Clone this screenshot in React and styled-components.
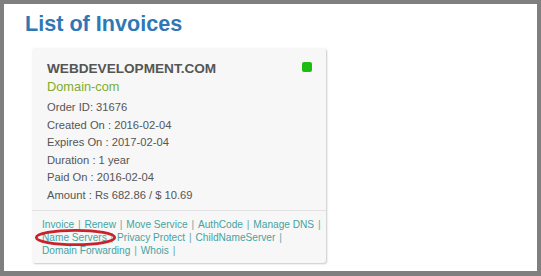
import React from 'react';
import styled, { createGlobalStyle } from 'styled-components';

const GlobalStyle = createGlobalStyle`
  html, body {
    margin: 0;
    padding: 0;
    background: #7f7f7f;
  }
  body {
    font-family: "Liberation Sans", Arial, sans-serif;
  }
`;

const Frame = styled.div`
  box-sizing: border-box;
  height: 276px;
  padding: 4px 4px 5px 4px;
`;

const Panel = styled.div`
  box-sizing: border-box;
  height: 100%;
  background: #ffffff;
  padding: 8px 0 0 21px;
`;

const Title = styled.h1`
  margin: 0;
  font-size: 21.6px;
  line-height: 24px;
  font-weight: bold;
  color: #2f78b5;
`;

const Card = styled.div`
  box-sizing: border-box;
  width: 294px;
  margin: 12px 0 0 7px;
  background: #f7f7f7;
  border-radius: 3px;
  box-shadow: 1px 1px 2px rgba(0, 0, 0, 0.22);
`;

const CardBody = styled.div`
  padding: 12px 14px 5px 15px;
`;

const HeaderRow = styled.div`
  display: flex;
  justify-content: space-between;
  align-items: flex-start;
`;

const Domain = styled.div`
  font-size: 13.6px;
  line-height: 18px;
  font-weight: bold;
  color: #555555;
`;

const Status = styled.span`
  width: 10px;
  height: 10px;
  margin-top: 2px;
  border-radius: 2px;
  background: ${(p) => (p.active ? '#1dbd13' : '#cc3333')};
`;

const Product = styled.div`
  font-size: 12.8px;
  line-height: 18px;
  color: #7fad2a;
  margin-bottom: 3px;
`;

const Detail = styled.div`
  font-size: 11.2px;
  line-height: 17.6px;
  color: #555555;
`;

const Actions = styled.div`
  border-top: 1px solid #e2e2e2;
  padding: 7px 10px 6px 10px;
  font-size: 10.15px;
  line-height: 13px;
`;

const Line = styled.div`
  white-space: nowrap;
`;

const Link = styled.a`
  position: relative;
  color: #45a3a3;
  text-decoration: none;
`;

const Sep = styled.span`
  color: #6aa9a9;
  margin: 0 3.85px;
`;

const Circle = styled.svg`
  position: absolute;
  left: -7px;
  top: -2.5px;
  width: 81px;
  height: 17px;
  overflow: visible;
  pointer-events: none;
`;

const details = [
  'Order ID: 31676',
  'Created On : 2016-02-04',
  'Expires On : 2017-02-04',
  'Duration : 1 year',
  'Paid On : 2016-02-04',
  'Amount : Rs 682.86 / $ 10.69',
];

const links = [
  ['Invoice', 'Renew', 'Move Service', 'AuthCode', 'Manage DNS'],
  ['Name Servers', 'Privacy Protect', 'ChildNameServer'],
  ['Domain Forwarding', 'Whois'],
];

export default function App() {
  return (
    <>
      <GlobalStyle />
      <Frame>
        <Panel>
          <Title>List of Invoices</Title>
          <Card>
            <CardBody>
              <HeaderRow>
                <Domain>WEBDEVELOPMENT.COM</Domain>
                <Status active />
              </HeaderRow>
              <Product>Domain-com</Product>
              {details.map((d) => (
                <Detail key={d}>{d}</Detail>
              ))}
            </CardBody>
            <Actions>
              {links.map((row, i) => (
                <Line key={i}>
                  {row.map((l) => (
                    <React.Fragment key={l}>
                      <Link href="#">
                        {l}
                        {l === 'Name Servers' && (
                          <Circle viewBox="0 0 81 17">
                            <ellipse cx="40.5" cy="8.5" rx="39.2" ry="7.2" fill="none" stroke="#c92229" strokeWidth="2.8" />
                          </Circle>
                        )}
                      </Link>
                      <Sep>|</Sep>
                    </React.Fragment>
                  ))}
                </Line>
              ))}
            </Actions>
          </Card>
        </Panel>
      </Frame>
    </>
  );
}
